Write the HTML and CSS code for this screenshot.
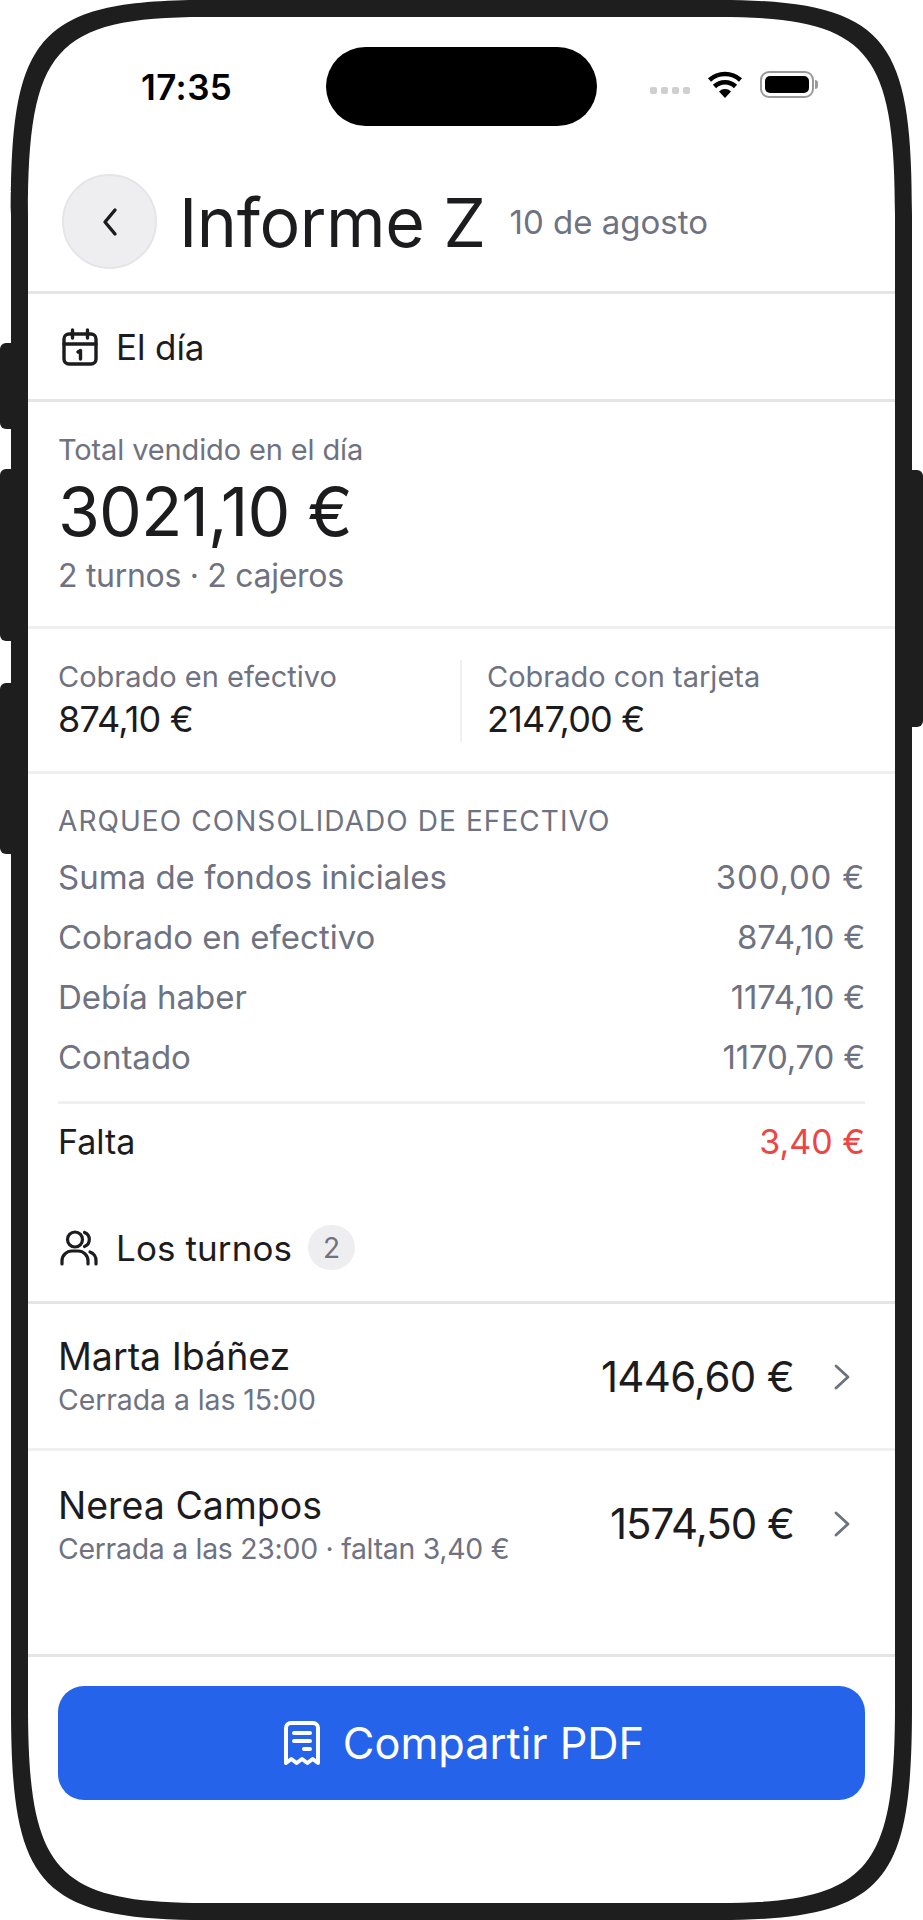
FILE: index.html
```html
<!DOCTYPE html>
<html lang="es">
<head>
<meta charset="utf-8">
<title>Informe Z</title>
<link rel="stylesheet" href="styles.css">
</head>
<body>
<div class="device">
  <span class="btn btn-l1"></span><span class="btn btn-l2"></span><span class="btn btn-l3"></span><span class="btn btn-r1"></span>
  <div class="screen">
    <div class="status">
      <span class="time">17:35</span>
      <span class="island"></span>
      <div class="status-icons">
        <span class="dots"><i></i><i></i><i></i><i></i></span>
        <svg class="wifi" viewBox="0 0 36 27"><path d="M18 27l-6-6.500a8.500 8.500 0 0 1 12 0z" fill="#000"/><path d="M7.500 15.500a15 15 0 0 1 21 0M2.500 9a23 23 0 0 1 31 0" fill="none" stroke="#000" stroke-width="4.600"/></svg>
        <span class="battery"><i></i></span>
      </div>
    </div>
    <header class="head">
      <span class="back"><svg viewBox="0 0 24 32"><path d="M17 4L7 16l10 12" fill="none" stroke="#1c1c1e" stroke-width="3.400" stroke-linecap="round" stroke-linejoin="round"/></svg></span>
      <h1 class="title">Informe Z</h1>
      <span class="date">10 de agosto</span>
    </header>
    <div class="bar">
      <svg class="cal" viewBox="0 0 36 38"><g fill="none" stroke="#1c1c1e" stroke-width="3.400" stroke-linecap="round" stroke-linejoin="round"><rect x="2" y="6" width="32" height="30" rx="5"/><path d="M2 16h32M10.500 2v8M25.500 2v8"/><path d="M16 24l2.500-1.500V31" /></g></svg>
      <span class="bar-text">El día</span>
    </div>
    <section class="total">
      <div class="lbl lbl-total">Total vendido en el día</div>
      <div class="big">3021,10 €</div>
      <div class="meta">2 turnos · 2 cajeros</div>
    </section>
    <section class="split">
      <div class="cell"><div class="lbl">Cobrado en efectivo</div><div class="val">874,10 €</div></div>
      <div class="cell cell-r"><div class="lbl">Cobrado con tarjeta</div><div class="val">2147,00 €</div></div>
    </section>
    <section class="arqueo">
      <div class="caps">ARQUEO CONSOLIDADO DE EFECTIVO</div>
      <div class="row"><span>Suma de fondos iniciales</span><span class="num num-wide">300,00 €</span></div>
      <div class="row"><span>Cobrado en efectivo</span><span class="num">874,10 €</span></div>
      <div class="row"><span>Debía haber</span><span class="num">1174,10 €</span></div>
      <div class="row"><span>Contado</span><span class="num">1170,70 €</span></div>
      <div class="row row-total"><span>Falta</span><span class="red">3,40 €</span></div>
    </section>
    <div class="turnos-head">
      <svg class="people" viewBox="0 0 38 36"><g fill="none" stroke="#1c1c1e" stroke-width="3.200" stroke-linecap="round"><circle cx="15" cy="9.500" r="7.500"/><path d="M24.500 2.500a7.500 7.500 0 0 1 0 14M2 34v-3a10 10 0 0 1 10-10h6a10 10 0 0 1 10 10v3M30 22a9 9 0 0 1 6 9v3"/></g></svg>
      <span class="turnos-text">Los turnos</span>
      <span class="badge">2</span>
    </div>
    <a class="shift">
      <div class="who"><div class="name">Marta Ibáñez</div><div class="sub">Cerrada a las 15:00</div></div>
      <div class="amt">1446,60 €</div>
      <svg class="chev" viewBox="0 0 18 28"><path d="M3 3l12 11L3 25" fill="none" stroke="#6b7280" stroke-width="2.800" stroke-linecap="round" stroke-linejoin="round"/></svg>
    </a>
    <a class="shift shift-last">
      <div class="who"><div class="name">Nerea Campos</div><div class="sub sub-tight">Cerrada a las 23:00 · faltan 3,40 €</div></div>
      <div class="amt">1574,50 €</div>
      <svg class="chev" viewBox="0 0 18 28"><path d="M3 3l12 11L3 25" fill="none" stroke="#6b7280" stroke-width="2.800" stroke-linecap="round" stroke-linejoin="round"/></svg>
    </a>
    <footer class="foot">
      <button class="cta">
        <svg class="receipt" viewBox="0 0 36 44"><g fill="none" stroke="#fff" stroke-width="4" stroke-linejoin="round" stroke-linecap="round"><path d="M2 42V7a5 5 0 0 1 5-5h22a5 5 0 0 1 5 5v35l-5.300-4-5.300 4-5.400-4-5.400 4-5.300-4z"/><path d="M10 12h16M10 20h16M20 28h6"/></g></svg>
        <span>Compartir PDF</span>
      </button>
    </footer>
  </div>
  <svg class="bezel" viewBox="0 0 923 1920"><path fill="#1e1e1e" fill-rule="evenodd" d="M11 215C11 40 34 0 205 0H718C889 0 912 40 912 215V1705C912 1880 889 1920 718 1920H205C34 1920 11 1880 11 1705ZM28 215V1705C28 1870 54 1903 205 1903H718C869 1903 895 1870 895 1705V215C895 50 869 17 718 17H205C54 17 28 50 28 215Z"/></svg>
</div>
</body>
</html>
```

FILE: styles.css
```css
* { box-sizing: border-box; }
html, body { margin: 0; padding: 0; background: #fff; }
body { width: 923px; height: 1920px; overflow: hidden; font-family: "Inter", "Liberation Sans", sans-serif; color: #1c1c1e; }
.device { position: relative; width: 923px; height: 1920px; padding: 17px 28px; }
.bezel { position: absolute; left: 0; top: 0; width: 923px; height: 1920px; pointer-events: none; }
.btn { position: absolute; background: #1e1e1e; width: 20px; border-radius: 6px; }
.btn-l1 { left: 0; top: 343px; height: 86px; }
.btn-l2 { left: 0; top: 469px; height: 172px; }
.btn-l3 { left: 0; top: 683px; height: 171px; }
.btn-r1 { right: 0; top: 470px; height: 257px; }
.screen { position: relative; background: #fff; height: 1886px; }

.status { position: relative; height: 146px; }
.time { position: absolute; left: 113px; top: 52px; font: 600 35px/36px "Inter", sans-serif; color: #000; letter-spacing: .4px; }
.island { position: absolute; left: 298px; top: 30px; width: 271px; height: 79px; border-radius: 40px; background: #000; }
.status-icons { position: absolute; left: 622px; top: 54px; display: flex; align-items: center; gap: 16px; }
.dots { display: flex; gap: 4px; margin-top: 12px; margin-right: 1px; }
.dots i { width: 7px; height: 7px; border-radius: 2px; background: #cfcfcf; }
.wifi { width: 36px; height: 27px; }
.battery { position: relative; width: 54px; height: 27px; margin-left: 1px; border: 2px solid #9a9a9a; border-radius: 9px; padding: 3px; }
.battery i { display: block; height: 100%; background: #000; border-radius: 5px; }
.battery::after { content: ""; position: absolute; right: -6px; top: 7px; width: 3px; height: 9px; background: #9a9a9a; border-radius: 0 3px 3px 0; }

.head { height: 131px; display: flex; align-items: center; padding: 0 34px 11px; border-bottom: 3px solid #e5e5e8; }
.back { width: 95px; height: 95px; border-radius: 50%; background: #eeeef0; border: 2px solid #e5e5e8; display: flex; align-items: center; justify-content: center; margin-right: 22px; }
.back svg { width: 24px; height: 32px; }
.title { margin: 1px 0 0; font-size: 68px; font-weight: 400; line-height: 1; letter-spacing: -.4px; color: #1c1c1e; }
.date { margin-left: 24px; font-size: 33px; color: #6f7280; }

.bar { height: 108px; display: flex; align-items: center; gap: 18px; padding-left: 34px; border-bottom: 3px solid #e5e5e8; }
.bar-text { font-size: 35px; letter-spacing: -.1px; }
.cal { width: 36px; height: 38px; }

.total { height: 227px; padding: 31px 30px 0; border-bottom: 3px solid #f0f0f2; }
.lbl { font-size: 29px; line-height: 34px; color: #6f7280; }
.lbl-total { letter-spacing: -.13px; }
.big { font-size: 68px; line-height: 80px; letter-spacing: -1px; margin-top: 3.500px; }
.meta { font-size: 32px; line-height: 40px; color: #6f7280; margin-top: 5px; letter-spacing: -.3px; }

.split { height: 145px; display: flex; padding: 31px 0 0 30px; border-bottom: 3px solid #f0f0f2; }
.cell { width: 402px; height: 82px; }
.cell-r { width: auto; border-left: 2px solid #f0f0f2; padding-left: 25px; }
.val { font-size: 36px; line-height: 44px; letter-spacing: -.8px; margin-top: 3px; }

.arqueo { padding: 31px 30px 0; }
.caps { font-size: 28px; line-height: 32px; color: #6f7280; letter-spacing: 1.070px; margin-bottom: 9.500px; }
.row { display: flex; justify-content: space-between; align-items: center; height: 60px; font-size: 33px; color: #6f7280; }
.num { letter-spacing: -.2px; }
.num-wide { letter-spacing: .8px; }
.row-total { height: 79px; margin-top: 14px; border-top: 3px solid #f0f0f2; color: #1c1c1e; font-size: 34px; }
.red { color: #ef4444; }

.turnos-head { height: 124px; display: flex; align-items: center; padding: 15.500px 0 0 32px; border-bottom: 3px solid #e5e5e8; }
.turnos-text { font-size: 35px; letter-spacing: .1px; }
.people { width: 38px; height: 36px; margin-right: 18px; }
.badge { margin-left: 16px; width: 47px; height: 45px; border-radius: 23px; background: #eeeef0; color: #6f7280; font-size: 28px; display: flex; align-items: center; justify-content: center; }

.shift { height: 147px; display: flex; align-items: center; padding: 0 44px 0 30px; border-bottom: 3px solid #f0f0f2; }
.shift-last { height: 206px; align-items: flex-start; padding-top: 33.500px; border-bottom: 3px solid #e5e5e8; }
.who { flex: 1; }
.name { font-size: 37.500px; line-height: 44px; }
.sub { font-size: 28.400px; line-height: 34px; color: #6f7280; margin-top: 4px; letter-spacing: -.06px; }
.sub-tight { letter-spacing: -.27px; }
.amt { font-size: 42px; line-height: 50px; letter-spacing: -.7px; margin-top: 3px; }
.chev { width: 18px; height: 28px; margin-left: 39px; margin-top: 3px; }
.shift-last .amt { margin-top: 15px; letter-spacing: -1px; }
.shift-last .chev { margin-top: 26px; }

.foot { padding: 29.500px 30px 0; }
.cta { width: 100%; height: 114px; border: 0; padding: 0 0 0 5px; border-radius: 26px; background: #2563eb; color: #fff; font: 400 43.300px "Inter", "Liberation Sans", sans-serif; display: flex; align-items: center; justify-content: center; gap: 23px; }
.receipt { width: 36px; height: 44px; }
```
